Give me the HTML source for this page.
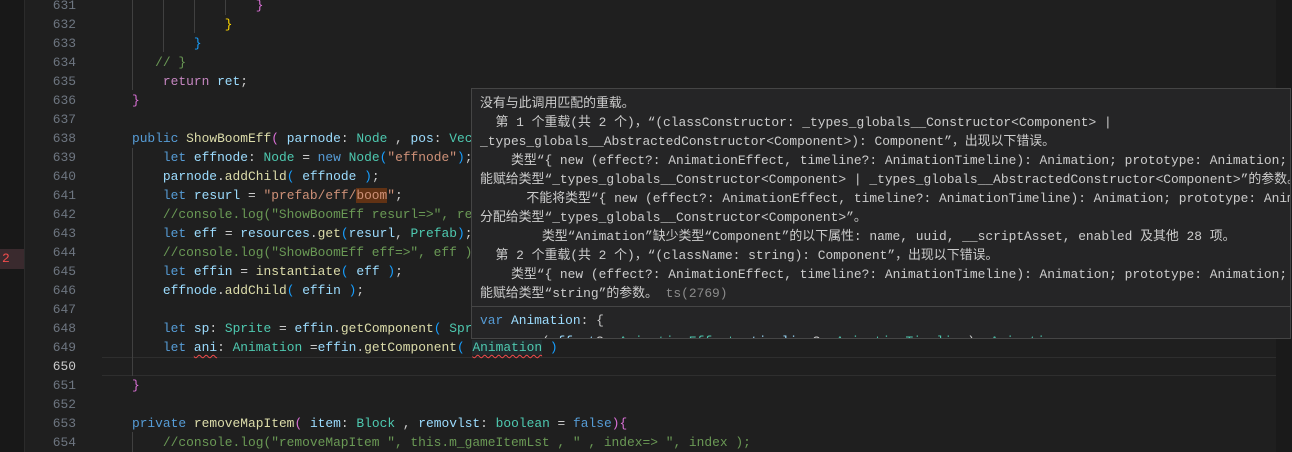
<!DOCTYPE html>
<html><head><meta charset="utf-8"><style>
html,body{margin:0;padding:0;width:1292px;height:452px;overflow:hidden;background:#1f1f1f;}
body{position:relative;font-family:"Liberation Mono","Noto Sans CJK SC",monospace;font-size:12.9px;}
.l{position:absolute;left:0;height:19px;line-height:19px;white-space:pre;width:1292px;}
.n{position:absolute;left:0;width:76px;text-align:right;color:#6e7681;}
.c{position:absolute;left:101px;color:#cccccc;}
.k{color:#569cd6}.p{color:#c586c0}.v{color:#9cdcfe}.t{color:#4ec9b0}.f{color:#dcdcaa}.s{color:#ce9178}.cm{color:#6a9955}.o{color:#d4d4d4}
.y{color:#ffd700}.m{color:#da70d6}.b{color:#179fff}
.g{position:absolute;width:1px;background:#404040;}
.sq{text-decoration:underline wavy #f14c4c;text-underline-offset:3px;text-decoration-thickness:1px}
#tip{position:absolute;left:471px;top:88px;width:818px;height:249px;background:#252526;border:1px solid #454545;overflow:hidden;color:#cccccc;}
#tip .r{position:absolute;left:8px;height:19px;line-height:19px;white-space:pre;font-size:12.9px;}
</style></head><body>
<div style="position:absolute;left:0;top:0;width:24px;height:452px;background:#181818"></div>
<div style="position:absolute;left:0;top:249px;width:24px;height:20px;background:#3a2a2e"></div>
<div style="position:absolute;left:2px;top:249px;line-height:20px;color:#f14c4c;font-size:13px">2</div>
<div style="position:absolute;left:24px;top:0;width:1px;height:452px;background:#2b2b2b"></div>
<div style="position:absolute;left:102px;top:357px;width:1190px;height:17px;border-top:1px solid #2e2e2e;border-bottom:1px solid #2e2e2e"></div>
<div style="position:absolute;left:1276px;top:0;width:16px;height:452px;background:#1a1a1a"></div>

<div class="g" style="left:132px;top:0;height:90px"></div>
<div class="g" style="left:163px;top:0;height:52px"></div>
<div class="g" style="left:194px;top:0;height:33px"></div>
<div class="g" style="left:225px;top:0;height:15px"></div>
<div class="g" style="left:132px;top:148px;height:228px"></div>
<div class="g" style="left:132px;top:432px;height:20px"></div>

<div class="l" style="top:-4px"><span class="n">631</span><span class="c">                    <span class="m">}</span></span></div>
<div class="l" style="top:15px"><span class="n">632</span><span class="c">                <span class="y">}</span></span></div>
<div class="l" style="top:34px"><span class="n">633</span><span class="c">            <span class="b">}</span></span></div>
<div class="l" style="top:53px"><span class="n">634</span><span class="c">       <span class="cm">// }</span></span></div>
<div class="l" style="top:72px"><span class="n">635</span><span class="c">        <span class="p">return</span> <span class="v">ret</span>;</span></div>
<div class="l" style="top:91px"><span class="n">636</span><span class="c">    <span class="m">}</span></span></div>
<div class="l" style="top:110px"><span class="n">637</span></div>
<div class="l" style="top:129px"><span class="n">638</span><span class="c">    <span class="k">public</span> <span class="f">ShowBoomEff</span><span class="m">(</span> <span class="v">parnode</span>: <span class="t">Node</span> , <span class="v">pos</span>: <span class="t">Vec3</span></span></div>
<div class="l" style="top:148px"><span class="n">639</span><span class="c">        <span class="k">let</span> <span class="v">effnode</span>: <span class="t">Node</span> = <span class="k">new</span> <span class="t">Node</span><span class="b">(</span><span class="s">"effnode"</span><span class="b">)</span>;</span></div>
<div class="l" style="top:167px"><span class="n">640</span><span class="c">        <span class="v">parnode</span>.<span class="f">addChild</span><span class="b">(</span> <span class="v">effnode</span> <span class="b">)</span>;</span></div>
<div class="l" style="top:186px"><span class="n">641</span><span class="c">        <span class="k">let</span> <span class="v">resurl</span> = <span class="s">"prefab/eff/<span style="background:#613214">boom</span>"</span>;</span></div>
<div class="l" style="top:205px"><span class="n">642</span><span class="c">        <span class="cm">//console.log("ShowBoomEff resurl=&gt;", resurl );</span></span></div>
<div class="l" style="top:224px"><span class="n">643</span><span class="c">        <span class="k">let</span> <span class="v">eff</span> = <span class="v">resources</span>.<span class="f">get</span><span class="b">(</span><span class="v">resurl</span>, <span class="t">Prefab</span><span class="b">)</span>;</span></div>
<div class="l" style="top:243px"><span class="n">644</span><span class="c">        <span class="cm">//console.log("ShowBoomEff eff=&gt;", eff );</span></span></div>
<div class="l" style="top:262px"><span class="n">645</span><span class="c">        <span class="k">let</span> <span class="v">effin</span> = <span class="f">instantiate</span><span class="b">(</span> <span class="v">eff</span> <span class="b">)</span>;</span></div>
<div class="l" style="top:281px"><span class="n">646</span><span class="c">        <span class="v">effnode</span>.<span class="f">addChild</span><span class="b">(</span> <span class="v">effin</span> <span class="b">)</span>;</span></div>
<div class="l" style="top:300px"><span class="n">647</span></div>
<div class="l" style="top:319px"><span class="n">648</span><span class="c">        <span class="k">let</span> <span class="v">sp</span>: <span class="t">Sprite</span> = <span class="v">effin</span>.<span class="f">getComponent</span><span class="b">(</span> <span class="t">Sprite</span> <span class="b">)</span>;</span></div>
<div class="l" style="top:338px"><span class="n">649</span><span class="c">        <span class="k">let</span> <span class="v sq">ani</span>: <span class="t">Animation</span> =<span class="v">effin</span>.<span class="f">getComponent</span><span class="b">(</span> <span class="t sq" style="background:#264f5a40">Animation</span> <span class="b">)</span></span></div>
<div class="l" style="top:357px"><span class="n" style="color:#cccccc">650</span></div>
<div class="l" style="top:376px"><span class="n">651</span><span class="c">    <span class="m">}</span></span></div>
<div class="l" style="top:395px"><span class="n">652</span></div>
<div class="l" style="top:414px"><span class="n">653</span><span class="c">    <span class="k">private</span> <span class="f">removeMapItem</span><span class="m">(</span> <span class="v">item</span>: <span class="t">Block</span> , <span class="v">removlst</span>: <span class="t">boolean</span> = <span class="k">false</span><span class="m">){</span></span></div>
<div class="l" style="top:433px"><span class="n">654</span><span class="c">        <span class="cm">//console.log("removeMapItem ", this.m_gameItemLst , " , index=&gt; ", index );</span></span></div>

<div id="tip">
<div class="r" style="top:5px">没有与此调用匹配的重载。</div>
<div class="r" style="top:24px">  第 1 个重载(共 2 个)，“(classConstructor: _types_globals__Constructor&lt;Component&gt; |</div>
<div class="r" style="top:43px">_types_globals__AbstractedConstructor&lt;Component&gt;): Component”，出现以下错误。</div>
<div class="r" style="top:62px">    类型“{ new (effect?: AnimationEffect, timeline?: AnimationTimeline): Animation; prototype: Animation; }”的参数不</div>
<div class="r" style="top:81px">能赋给类型“_types_globals__Constructor&lt;Component&gt; | _types_globals__AbstractedConstructor&lt;Component&gt;”的参数。</div>
<div class="r" style="top:100px">      不能将类型“{ new (effect?: AnimationEffect, timeline?: AnimationTimeline): Animation; prototype: Animation; }”</div>
<div class="r" style="top:119px">分配给类型“_types_globals__Constructor&lt;Component&gt;”。</div>
<div class="r" style="top:138px">        类型“Animation”缺少类型“Component”的以下属性: name, uuid, __scriptAsset, enabled 及其他 28 项。</div>
<div class="r" style="top:157px">  第 2 个重载(共 2 个)，“(className: string): Component”，出现以下错误。</div>
<div class="r" style="top:176px">    类型“{ new (effect?: AnimationEffect, timeline?: AnimationTimeline): Animation; prototype: Animation; }”的参数不</div>
<div class="r" style="top:195px">能赋给类型“string”的参数。 <span style="color:#8b8b8b">ts(2769)</span></div>
<div style="position:absolute;left:0;top:217px;width:830px;height:1px;background:#454545"></div>
<div class="r" style="top:222px"><span class="k">var</span> <span class="v">Animation</span>: {</div>
<div class="r" style="top:243px">    <span class="k">new</span> (<span class="v">effect</span>?: <span class="t">AnimationEffect</span>, <span class="v">timeline</span>?: <span class="t">AnimationTimeline</span>): <span class="t">Animation</span>;</div>
</div>
</body></html>
